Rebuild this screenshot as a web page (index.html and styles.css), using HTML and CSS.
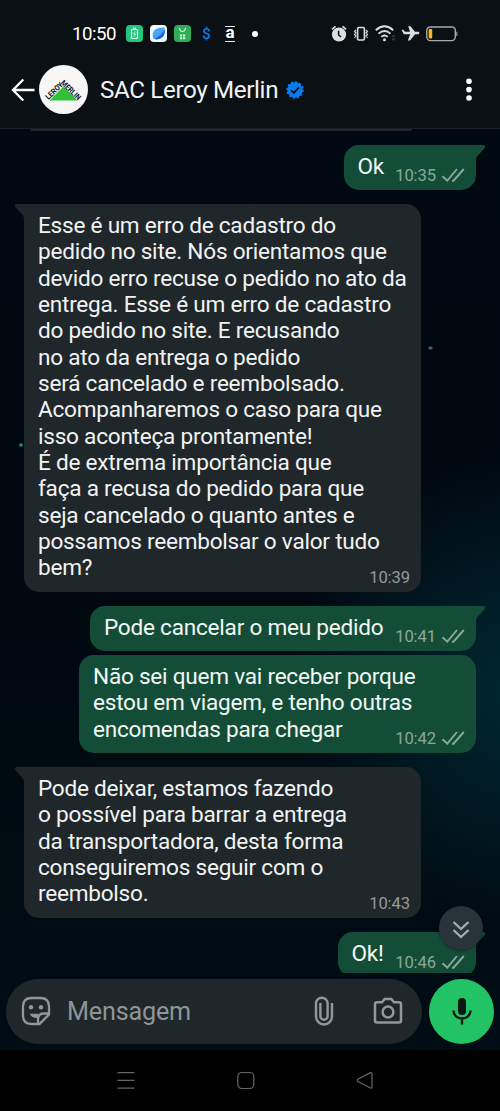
FILE: index.html
```html
<!DOCTYPE html>
<html lang="pt-BR">
<head>
<meta charset="utf-8">
<title>SAC Leroy Merlin</title>
<link rel="stylesheet" href="styles.css">
</head>
<body>
<svg class="defs" width="0" height="0">
  <symbol id="ticks" viewBox="0 0 24 16"><path d="M1.500 9.300L6.300 13.700L16 2M11 13.700L12.500 13.700L22.800 2" fill="none" stroke="currentColor" stroke-width="1.900"/></symbol>
  <symbol id="tail-out" viewBox="0 0 12 16"><path d="M0 0H8.500Q11.500 .5 9.400 3.200L2 11.500Q1 13 1 16H0Z" fill="currentColor"/></symbol>
  <symbol id="tail-in" viewBox="0 0 12 16"><path d="M12 0H3.500Q.5 .5 2.600 3.200L10 11.500Q11 13 11 16H12Z" fill="currentColor"/></symbol>
</svg>
<div class="phone">
  <header class="top">
    <div class="status">
      <span class="clock">10:50</span>
      <div class="apps">
        <svg width="17" height="17" viewBox="0 0 17 17"><rect width="17" height="17" rx="4" fill="#24c67b"/><rect x="5.500" y="4.500" width="6" height="9" rx="1" fill="none" stroke="#e4fff0" stroke-width="1.200"/><path d="M7 3.300h3" stroke="#e4fff0" stroke-width="1.300"/><path d="M9 6.500L7.500 9h2L8 11.500" fill="none" stroke="#e4fff0" stroke-width=".8"/></svg>
        <svg width="17" height="17" viewBox="0 0 17 17"><rect width="17" height="17" rx="4" fill="#f4f9ff"/><path d="M3 13.500Q1.500 7 6 4Q9 2 14.500 2.500Q15.500 9 12.500 12Q9 15.500 3 13.500Z" fill="#48a7f5"/><path d="M4 14Q12 10.500 14.500 4Q15.500 9 12.500 12Q9 15.500 4 14Z" fill="#225bd9"/></svg>
        <svg width="17" height="17" viewBox="0 0 17 17"><rect width="17" height="17" rx="4" fill="#31ad58"/><path d="M5.500 3Q6 6.500 8.500 6.500T11.500 3" fill="none" stroke="#d8ffe1" stroke-width="1.200"/><path d="M5.900 9.500h2.200v2H5.900zM9 9.500h2.200v2H9zM5.900 12.300h2.200v2H5.900zM9 12.300h2.200v2H9z" fill="#d8ffe1"/></svg>
        <span class="dollar">$</span>
        <span class="letter">a</span>
        <i class="dot"></i>
      </div>
      <div class="system">
        <svg width="16" height="17" viewBox="0 0 16 17"><circle cx="8" cy="9.500" r="7.100" fill="#dedede"/><path d="M1 4.300L4.500 1.300M15 4.300L11.500 1.300" stroke="#dedede" stroke-width="1.700"/><path d="M7.600 5.800V10l2.500 2" stroke="#0b1014" stroke-width="1.500" fill="none"/></svg>
        <svg width="16" height="16" viewBox="0 0 16 16" fill="none" stroke="#dedede"><rect x="4.600" y="1.500" width="6.800" height="12.500" rx="1.300" stroke-width="1.600"/><path d="M3 4L1.500 5.500L3 7L1.500 8.500L3 10L1.500 12M13 4l1.500 1.500L13 7l1.500 1.500L13 10l1.500 2" stroke-width="1.100"/></svg>
        <svg width="20" height="17" viewBox="0 0 20 17" fill="none" stroke="#dedede" stroke-width="1.900"><path d="M.8 5.200Q9.500-2.600 18.200 5.200M3.500 8.600q6-5.200 12 0M6.300 11.900q3.200-2.900 6.400 0"/><circle cx="9.500" cy="14.700" r="1.500" fill="#dedede" stroke="none"/><path d="M16.400 12l2-2.500 2 2.500zM16.400 13.500l2 2.500 2-2.500z" fill="#3a3e41" stroke="none"/></svg>
        <svg width="19" height="17" viewBox="0 0 19 17"><path d="M.5 4.800h1.800l1.700 2h5L7.200 1.200h2.200l4.600 5.600h3.300q2.200 1.200 0 2.500h-3.200L9 15.500H6.800L9.300 9.300H2.800Z" fill="#dedede"/></svg>
        <svg width="32" height="16" viewBox="0 0 32 16"><rect x=".8" y="1" width="28.500" height="13.600" rx="3.500" fill="none" stroke="#a8aaac" stroke-width="1.400"/><rect x="2.700" y="3" width="3.500" height="9.600" rx="1" fill="#ffb719"/><path d="M30.800 5.700v4.300" stroke="#888b8d" stroke-width="1.300"/></svg>
      </div>
    </div>
    <div class="title-row">
      <svg class="back" width="24" height="24" viewBox="0 0 24 24" fill="none" stroke="#fff" stroke-width="2.300"><path d="M23.500 12H2M12.300 1.500L2 12l10.300 10.500"/></svg>
      <svg class="avatar" width="49" height="49" viewBox="0 0 49 49"><circle cx="24.500" cy="24.500" r="24.500" fill="#f5f6f5"/><path d="M10.500 35.500L24.500 21.500L38.500 35.500Z" fill="#31bf35"/><text transform="translate(9.500 35) rotate(-44)" textLength="21" lengthAdjust="spacingAndGlyphs">LEROY</text><text transform="translate(21.200 18.600) rotate(44)" textLength="24.500" lengthAdjust="spacingAndGlyphs">MERLIN</text></svg>
      <h1>SAC Leroy Merlin</h1>
      <svg class="verified" width="18" height="18" viewBox="0 0 18 18"><circle cx="9" cy="9" r="7.700" fill="#087df0"/><circle cx="9" cy="9" r="8" fill="none" stroke="#087df0" stroke-width="1.500" stroke-dasharray="2.090"/><path d="M5 9.200l2.800 2.700 5.300-5.500" fill="none" stroke="#0b1014" stroke-width="1.800"/></svg>
      <svg class="more" width="6" height="24" viewBox="0 0 6 24" fill="#fff"><circle cx="3" cy="3.200" r="2.800"/><circle cx="3" cy="11.600" r="2.800"/><circle cx="3" cy="20" r="2.800"/></svg>
    </div>
  </header>
  <main class="chat">
    <div class="previous"></div>
    <div class="msg out single"><svg class="tail"><use href="#tail-out"/></svg><p>Ok</p><span class="meta">10:35<svg><use href="#ticks"/></svg></span></div>
    <div class="msg in"><svg class="tail"><use href="#tail-in"/></svg><p>Esse é um erro de cadastro do<br>pedido no site. Nós orientamos que<br>devido erro recuse o pedido no ato da<br>entrega. Esse é um erro de cadastro<br>do pedido no site. E recusando<br>no ato da entrega o pedido<br>será cancelado e reembolsado.<br>Acompanharemos o caso para que<br>isso aconteça prontamente!<br>É de extrema importância que<br>faça a recusa do pedido para que<br>seja cancelado o quanto antes e<br>possamos reembolsar o valor tudo<br>bem?</p><span class="meta">10:39</span></div>
    <div class="msg out wide"><svg class="tail"><use href="#tail-out"/></svg><p>Pode cancelar o meu pedido</p><span class="meta">10:41<svg><use href="#ticks"/></svg></span></div>
    <div class="msg out block"><p>Não sei quem vai receber porque<br>estou em viagem, e tenho outras<br>encomendas para chegar</p><span class="meta">10:42<svg><use href="#ticks"/></svg></span></div>
    <div class="msg in"><svg class="tail"><use href="#tail-in"/></svg><p>Pode deixar, estamos fazendo<br>o possível para barrar a entrega<br>da transportadora, desta forma<br>conseguiremos seguir com o<br>reembolso.</p><span class="meta">10:43</span></div>
    <div class="msg out last"><svg class="tail"><use href="#tail-out"/></svg><p>Ok!</p><span class="meta">10:46<svg><use href="#ticks"/></svg></span></div>
  </main>
  <button class="jump" aria-label="Ir para o fim"><svg width="18" height="20" viewBox="0 0 18 20" fill="none" stroke="#a5adb2" stroke-width="2.300"><path d="M1.500 2L9 9l7.500-7M1.500 10L9 17l7.500-7"/></svg></button>
  <div class="composer">
    <div class="field">
      <svg class="sticker" width="30" height="30" viewBox="0 0 30 30" fill="none" stroke="#90989c" stroke-width="2.300"><path d="M10.500 2h9Q28 2 28 10.500V18.500L18.500 28h-8Q2 28 2 19.500v-9Q2 2 10.500 2ZM17 28v-4.500q0-6 6-6h5"/><path d="M8.700 17.800h8.800l-1.500 4.200q-5.500 0-7.300-4.200Z" fill="#90989c" stroke="none"/><circle cx="10" cy="11.300" r="2.200" fill="#90989c" stroke="none"/><circle cx="20" cy="11.300" r="2.200" fill="#90989c" stroke="none"/></svg>
      <span class="hint">Mensagem</span>
      <svg class="clip" width="20" height="30" viewBox="0 0 20 30" fill="none" stroke="#90989c" stroke-width="2.400"><path d="M18 7v13.500a8 8 0 0 1-16 0V7.500a5.800 5.800 0 0 1 11.600 0v12.700a3.600 3.600 0 0 1-7.200 0V7"/></svg>
      <svg class="camera" width="30" height="28" viewBox="0 0 30 28" fill="none" stroke="#90989c" stroke-width="2.500"><path d="M4 5.200h5l2.700-3.200h6.600L21 5.200h5q2 0 2 2v16.300q0 2-2 2H4q-2 0-2-2V7.200q0-2 2-2Z"/><circle cx="15" cy="15" r="5.400"/></svg>
    </div>
    <button class="mic" aria-label="Gravar"><svg width="20" height="28" viewBox="0 0 20 28" fill="none" stroke="#0a1713" stroke-width="2.300"><rect x="6" y="1" width="8" height="17" rx="4" fill="#0a1713" stroke="none"/><path d="M1.500 13.500v.5a8.500 7.500 0 0 0 17 0v-.5M10 21.500v6"/></svg></button>
  </div>
  <nav class="nav">
    <svg width="18" height="18" viewBox="0 0 18 18" stroke="#666" stroke-width="1.300"><path d="M.5 .7h17M.5 8.400h17M.5 16.100h17"/></svg>
    <svg width="18" height="18" viewBox="0 0 18 18" fill="none" stroke="#666" stroke-width="1.200"><rect x=".8" y=".5" width="16" height="16" rx="4"/></svg>
    <svg width="18" height="18" viewBox="0 0 18 18" fill="none" stroke="#666" stroke-width="1.200"><path d="M1.800 7.300L14 .9q2-.7 2 1.300v12.400q0 2-2 1.200L1.800 9.500Q.6 8.500 1.800 7.300Z"/></svg>
  </nav>
</div>
</body>
</html>
```
FILE: styles.css
```css
* { box-sizing: border-box; }
body { margin: 0; background: #000; font-family: Roboto, "Liberation Sans", sans-serif; color: #f1f3f4; }
button { border: 0; padding: 0; display: grid; place-items: center; }
svg { display: block; flex: none; overflow: visible; }
.defs { position: absolute; }
.phone {
  position: relative; width: 500px; height: 1111px; overflow: hidden;
  display: flex; flex-direction: column;
  background:
    radial-gradient(ellipse 3px 2px at 430.500px 348px, #6d9795, transparent),
    radial-gradient(circle at 21px 445px, #3d98a3 .5px, transparent 2.500px),
    radial-gradient(ellipse 230px 240px at 520px 690px, #002833, transparent),
    linear-gradient(#000a12, #000810 45%, #000b12 75%, #000d15);
}
.top { height: 129px; background: #0b1014; border-bottom: 1px solid #172126; flex: none; }
.status { height: 57px; padding: 10px 42px 0 72px; display: flex; align-items: center; }
.clock { font-size: 18.700px; letter-spacing: -.5px; width: 54px; color: #fff; }
.apps { display: flex; align-items: center; gap: 7px; }
.dollar { width: 17px; text-align: center; color: #087be8; font-size: 15.500px; font-weight: 500; }
.letter { width: 10px; height: 16px; margin-left: 3px; border: solid #eee; border-width: 1.500px 0; color: #fff; font: bold 17px/11px Roboto, sans-serif; text-align: center; }
.dot { width: 6px; height: 6px; margin-left: 10px; background: #fff; border-radius: 50%; }
.system { margin-left: auto; display: flex; align-items: center; gap: 6px; }
.title-row { height: 65px; padding: 0 28px 0 11px; display: flex; align-items: center; }
.avatar { margin-left: 4px; }
.avatar text { font: bold 7.800px Roboto, sans-serif; fill: #161616; }
.title-row h1 { margin: 0 0 0 12px; font-size: 24.200px; letter-spacing: -.36px; font-weight: 400; line-height: 30px; white-space: nowrap; }
.verified { margin-left: 8px; }
.more { margin-left: auto; }
.chat { height: 843.500px; flex: none; overflow: hidden; display: flex; flex-direction: column; padding: 0 24px; }
.previous { height: 1.500px; width: 382px; margin: 0 0 14px 6px; background: #1f272b; border-radius: 0 0 8px 8px; flex: none; }
.msg { position: relative; display: grid; grid-template-columns: 100%; flex: none; padding: 9px 14px 10px; border-radius: 15px; margin-bottom: 14px; }
.msg p { margin: 0; grid-area: 1 / 1; font-size: 22.600px; letter-spacing: -.24px; line-height: 26.350px; white-space: nowrap; }
.in { width: 397px; background: #20272a; color: #f1f3f4; border-top-left-radius: 0; }
.out { align-self: flex-end; background: #144d37; border-top-right-radius: 0; color: #f1f8f5; }
.single { width: 132.500px; }
.wide { width: 386px; margin-bottom: 4px; }
.block { width: 397px; border-top-right-radius: 15px; }
.last { width: 138.500px; }
.meta { grid-area: 1 / 1; align-self: end; justify-self: end; display: flex; align-items: center; font-size: 16.600px; line-height: 20px; letter-spacing: -.1px; margin: 0 -3px -6px 0; color: #929a9d; }
.out .meta { color: #89a99c; }
.meta svg { width: 24px; height: 16px; margin-left: 5px; margin-top: -2px; }
.tail { position: absolute; top: 0; width: 12px; height: 16px; }
.out .tail { left: calc(100% - 1px); color: #144d37; }
.in .tail { right: calc(100% - 1px); color: #20272a; }
.jump { position: absolute; left: 439px; top: 906px; width: 44px; height: 44px; border-radius: 50%; background: #28333a; box-shadow: 0 1px 3px #0006; }
.jump svg { margin-top: 3px; }
.composer { height: 77.500px; flex: none; padding: 6px 6px 0; display: flex; gap: 7px; }
.field { width: 416px; height: 65px; border-radius: 33px; background: #20272a; display: flex; align-items: center; padding: 0 19px 0 15px; }
.hint { margin-left: 16px; color: #8d9599; font-size: 25.200px; letter-spacing: -.2px; }
.clip { margin-left: auto; }
.camera { margin-left: 39px; }
.mic { width: 65px; height: 65px; border-radius: 50%; background: #22c365; }
.nav { flex: 1; background: #000; display: flex; justify-content: center; align-items: center; gap: 101.500px; padding-right: 9px; }
```
